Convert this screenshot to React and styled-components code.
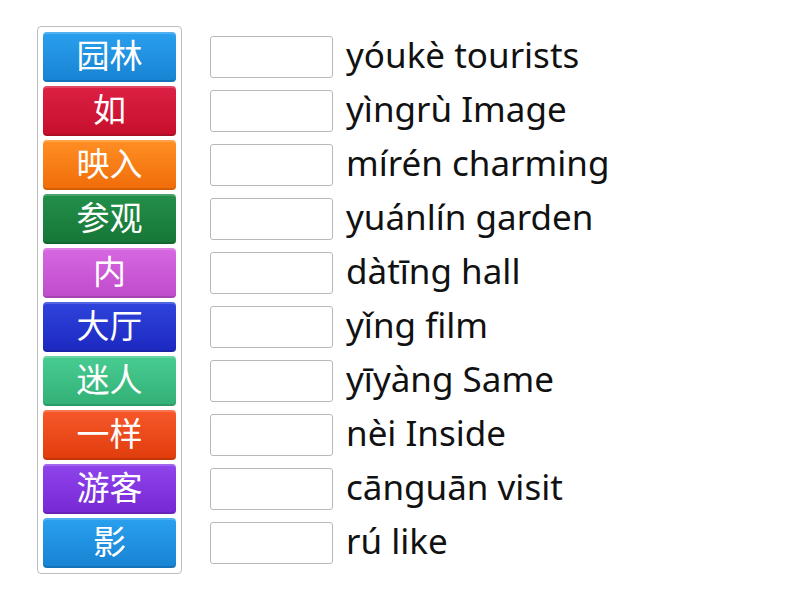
import React from "react";
import styled, { createGlobalStyle } from "styled-components";

const Global = createGlobalStyle`
  html, body {
    margin: 0;
    padding: 0;
    background: #fff;
    font-family: "Noto Sans", "Noto Sans CJK SC", sans-serif;
  }
`;

const Page = styled.div`
  display: flex;
  align-items: flex-start;
  padding: 26px 0 0 37px;
  width: 800px;
  height: 600px;
  box-sizing: border-box;
`;

const Bank = styled.div`
  display: flex;
  flex-direction: column;
  gap: 4px;
  padding: 5px;
  border: 1px solid #bdbdbd;
  border-radius: 4px;
`;

const Tile = styled.div`
  width: 133px;
  height: 50px;
  box-sizing: border-box;
  padding-bottom: 6px;
  border-radius: 4px;
  display: flex;
  align-items: center;
  justify-content: center;
  color: #fff;
  font-family: "Noto Sans CJK SC", sans-serif;
  font-size: 33px;
  background: linear-gradient(${(p) => p.$top}, ${(p) => p.$bottom});
  box-shadow: inset 0 2px 0 rgba(255, 255, 255, 0.18),
    inset 0 -2px 0 rgba(0, 0, 0, 0.12);
`;

const Targets = styled.div`
  display: flex;
  flex-direction: column;
  gap: 12px;
  margin: 10px 0 0 28px;
`;

const Row = styled.div`
  display: flex;
  align-items: center;
  gap: 13px;
  height: 42px;
`;

const Slot = styled.div`
  width: 123px;
  height: 42px;
  box-sizing: border-box;
  border: 1px solid #b8b8b8;
  border-radius: 3px;
  background: #fff;
`;

const Label = styled.span`
  font-family: "Noto Sans", sans-serif;
  font-size: 35px;
  color: #111;
  line-height: 1;
  margin-top: -6px;
  white-space: nowrap;
`;

const tiles = [
  ["园林", "#2aa0ee", "#1782d2"],
  ["如", "#dc2044", "#c60f2c"],
  ["映入", "#ff8f24", "#f06c08"],
  ["参观", "#23904a", "#167536"],
  ["内", "#d867e2", "#bf4ccb"],
  ["大厅", "#2e44dc", "#1c28c0"],
  ["迷人", "#48cc92", "#32b076"],
  ["一样", "#f7582a", "#e03c0c"],
  ["游客", "#9044ec", "#7628d2"],
  ["影", "#2aa0ee", "#1782d2"],
];

const labels = [
  "yóukè tourists",
  "yìngrù Image",
  "mírén charming",
  "yuánlín garden",
  "dàtīng hall",
  "yǐng film",
  "yīyàng Same",
  "nèi Inside",
  "cānguān visit",
  "rú like",
];

export default function App() {
  return (
    <>
      <Global />
      <Page>
        <Bank>
          {tiles.map(([t, a, b]) => (
            <Tile key={t} $top={a} $bottom={b}>
              {t}
            </Tile>
          ))}
        </Bank>
        <Targets>
          {labels.map((l) => (
            <Row key={l}>
              <Slot />
              <Label>{l}</Label>
            </Row>
          ))}
        </Targets>
      </Page>
    </>
  );
}
